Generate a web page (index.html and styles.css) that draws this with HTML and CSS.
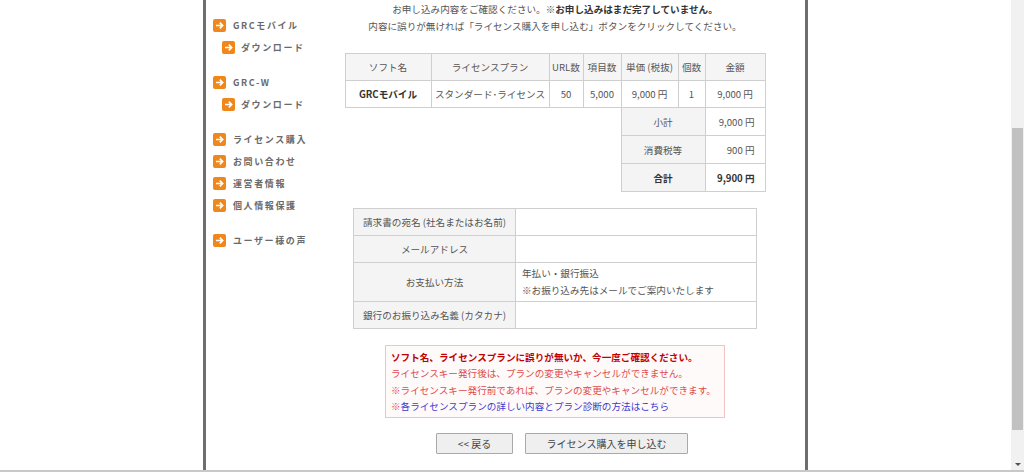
FILE: index.html
```html
<!DOCTYPE html>
<html lang="ja">
<head>
<meta charset="utf-8">
<title>ライセンス購入 確認</title>
<link rel="stylesheet" href="styles.css">
</head>
<body>
<div class="screen">
  <div class="viewport">
    <div class="gutter"></div>
    <div class="frame">
      <nav class="sidebar">
        <ul class="group">
          <li class="item"><span class="ico"><svg viewBox="0 0 13 13"><rect width="13" height="13" rx="2" fill="#f0871a"/><path d="M3 6.5h6.5M6.8 3.6l2.9 2.9-2.9 2.9" fill="none" stroke="#fff" stroke-width="1.6"/></svg></span>GRCモバイル</li>
          <li class="item sub"><span class="ico"><svg viewBox="0 0 13 13"><rect width="13" height="13" rx="2" fill="#f0871a"/><path d="M3 6.5h6.5M6.8 3.6l2.9 2.9-2.9 2.9" fill="none" stroke="#fff" stroke-width="1.6"/></svg></span>ダウンロード</li>
        </ul>
        <ul class="group">
          <li class="item"><span class="ico"><svg viewBox="0 0 13 13"><rect width="13" height="13" rx="2" fill="#f0871a"/><path d="M3 6.5h6.5M6.8 3.6l2.9 2.9-2.9 2.9" fill="none" stroke="#fff" stroke-width="1.6"/></svg></span>GRC-W</li>
          <li class="item sub"><span class="ico"><svg viewBox="0 0 13 13"><rect width="13" height="13" rx="2" fill="#f0871a"/><path d="M3 6.5h6.5M6.8 3.6l2.9 2.9-2.9 2.9" fill="none" stroke="#fff" stroke-width="1.6"/></svg></span>ダウンロード</li>
        </ul>
        <ul class="group">
          <li class="item"><span class="ico"><svg viewBox="0 0 13 13"><rect width="13" height="13" rx="2" fill="#f0871a"/><path d="M3 6.5h6.5M6.8 3.6l2.9 2.9-2.9 2.9" fill="none" stroke="#fff" stroke-width="1.6"/></svg></span>ライセンス購入</li>
          <li class="item"><span class="ico"><svg viewBox="0 0 13 13"><rect width="13" height="13" rx="2" fill="#f0871a"/><path d="M3 6.5h6.5M6.8 3.6l2.9 2.9-2.9 2.9" fill="none" stroke="#fff" stroke-width="1.6"/></svg></span>お問い合わせ</li>
          <li class="item"><span class="ico"><svg viewBox="0 0 13 13"><rect width="13" height="13" rx="2" fill="#f0871a"/><path d="M3 6.5h6.5M6.8 3.6l2.9 2.9-2.9 2.9" fill="none" stroke="#fff" stroke-width="1.6"/></svg></span>運営者情報</li>
          <li class="item"><span class="ico"><svg viewBox="0 0 13 13"><rect width="13" height="13" rx="2" fill="#f0871a"/><path d="M3 6.5h6.5M6.8 3.6l2.9 2.9-2.9 2.9" fill="none" stroke="#fff" stroke-width="1.6"/></svg></span>個人情報保護</li>
        </ul>
        <ul class="group">
          <li class="item"><span class="ico"><svg viewBox="0 0 13 13"><rect width="13" height="13" rx="2" fill="#f0871a"/><path d="M3 6.5h6.5M6.8 3.6l2.9 2.9-2.9 2.9" fill="none" stroke="#fff" stroke-width="1.6"/></svg></span>ユーザー様の声</li>
        </ul>
      </nav>
      <main class="main">
        <p class="intro">お申し込み内容をご確認ください。※<b>お申し込みはまだ完了していません。</b><br>内容に誤りが無ければ「ライセンス購入を申し込む」ボタンをクリックしてください。</p>

        <table class="order">
          <colgroup>
            <col class="c1"><col class="c2"><col class="c3"><col class="c4"><col class="c5"><col class="c6"><col class="c7">
          </colgroup>
          <tr class="head">
            <th>ソフト名</th><th>ライセンスプラン</th><th>URL数</th><th>項目数</th><th>単価 (税抜)</th><th>個数</th><th>金額</th>
          </tr>
          <tr class="data">
            <td class="soft">GRCモバイル</td><td>スタンダード･ライセンス</td><td>50</td><td>5,000</td><td>9,000 円</td><td>1</td><td>9,000 円</td>
          </tr>
          <tr class="sum">
            <td class="blank" colspan="4"></td><td class="lbl" colspan="2">小計</td><td class="val">9,000 円</td>
          </tr>
          <tr class="sum">
            <td class="blank" colspan="4"></td><td class="lbl" colspan="2">消費税等</td><td class="val">900 円</td>
          </tr>
          <tr class="sum total">
            <td class="blank" colspan="4"></td><td class="lbl" colspan="2">合計</td><td class="val">9,900 円</td>
          </tr>
        </table>

        <table class="form">
          <tr><th>請求書の宛名 (社名またはお名前)</th><td></td></tr>
          <tr><th>メールアドレス</th><td></td></tr>
          <tr class="tall"><th>お支払い方法</th><td>年払い・銀行振込<br>※お振り込み先はメールでご案内いたします</td></tr>
          <tr><th>銀行のお振り込み名義 (カタカナ)</th><td></td></tr>
        </table>

        <div class="notice">
          <p class="warn">ソフト名、ライセンスプランに誤りが無いか、今一度ご確認ください。</p>
          <p class="red">ライセンスキー発行後は、プランの変更やキャンセルができません。</p>
          <p class="red">※ライセンスキー発行前であれば、プランの変更やキャンセルができます。</p>
          <p class="red">※<a class="link" href="#">各ライセンスプランの詳しい内容とプラン診断の方法はこちら</a></p>
        </div>

        <div class="buttons">
          <button class="btn back" type="button">&lt;&lt; 戻る</button>
          <button class="btn submit" type="button">ライセンス購入を申し込む</button>
        </div>
      </main>
    </div>
    <div class="rest"></div>
    <div class="scrollbar">
      <div class="track-top"></div>
      <div class="thumb"></div>
      <div class="track-bottom"><span class="arrow"></span></div>
    </div>
  </div>
  <div class="hline"></div>
</div>
</body>
</html>
```
FILE: styles.css
```css
* { box-sizing: border-box; }
html, body { margin: 0; padding: 0; background: #fff; }
body {
  font-family: "Noto Sans CJK JP", "Noto Sans", sans-serif;
  font-size: 9.6px;
  color: #555;
  overflow: hidden;
}
.screen { width: 1024px; height: 472px; display: flex; flex-direction: column; }
.viewport { display: flex; height: 470px; }
.gutter { width: 203px; flex: none; }
.frame {
  width: 605px;
  flex: none;
  display: flex;
  border-left: 3px solid #6e6e6e;
  border-right: 3px solid #6e6e6e;
}
.rest { flex: 1; }
.hline { height: 2px; background: #c8c8c8; }

/* sidebar */
.sidebar { width: 134px; flex: none; padding: 14px 0 0 7px; }
.group { list-style: none; margin: 0 0 13px; padding: 0; }
.item {
  height: 22px;
  display: flex;
  align-items: center;
  font-size: 9px;
  font-weight: bold;
  letter-spacing: 1.6px;
  color: #6a6a6a;
}
.item.sub { padding-left: 9px; }
.ico { width: 13px; height: 13px; margin-right: 7px; display: block; flex: none; }
.item.sub .ico { margin-right: 6px; }
.ico svg { width: 13px; height: 13px; display: block; }

/* main */
.main { width: 430px; flex: none; display: flex; flex-direction: column; align-items: center; }
.intro { margin: 0; line-height: 17px; text-align: center; padding-top: 1px; }
.intro b { color: #333; }

table { border-collapse: collapse; }
.order { width: 420px; margin-top: 18px; table-layout: fixed; }
.c1 { width: 86px; } .c2 { width: 118px; } .c3 { width: 34px; } .c4 { width: 38px; }
.c5 { width: 57px; } .c6 { width: 27px; } .c7 { width: 60px; }
.order th, .order td {
  border: 1px solid #cfcfcf;
  text-align: center;
  font-weight: normal;
  padding: 0;
  white-space: nowrap;
}
.order .head th { height: 27px; background: #f5f5f5; }
.order .data td { height: 27px; }
.order .soft { font-weight: bold; color: #333; }
.order .sum td { height: 28px; }
.order .blank { border: none; }
.order .lbl { background: #f4f4f4; }
.order .val { text-align: right; padding-right: 10px; }
.order .total td { font-weight: bold; color: #333; }

.form { width: 404px; margin-top: 16px; table-layout: fixed; }
.form th, .form td { border: 1px solid #cfcfcf; height: 27px; padding: 0; }
.form th { width: 162px; background: #f4f4f4; font-weight: normal; text-align: center; }
.form td { padding-left: 6px; line-height: 17px; }
.form .tall th, .form .tall td { height: 39px; }

.notice {
  width: 340px;
  margin-top: 16px;
  border: 1px solid #f0c4c4;
  background: #fffafa;
  padding: 3px 5px 3px;
  line-height: 16.3px;
}
.notice p { margin: 0; white-space: nowrap; }
.notice .warn { color: #c00000; font-weight: bold; }
.notice .red { color: #dd4a4a; }
.notice .link { color: #3b3bd0; text-decoration: none; }

.buttons { display: flex; gap: 12px; margin-top: 15px; padding-left: 14px; }
.btn {
  height: 21px;
  font-family: inherit;
  font-size: 10px;
  color: #444;
  background: #efefef;
  border: 1px solid #a9a9a9;
  border-radius: 1px;
  padding: 0;
}
.btn.back { width: 77px; }
.btn.submit { width: 163px; }

/* scrollbar */
.scrollbar { width: 13px; flex: none; background: #f1f1f1; display: flex; flex-direction: column; }
.track-top { height: 128px; }
.thumb { height: 302px; background: #c1c1c1; margin: 0 1px; }
.track-bottom { flex: 1; display: flex; align-items: flex-end; justify-content: center; padding-bottom: 4px; }
.arrow {
  width: 0; height: 0;
  border-left: 3px solid transparent;
  border-right: 3px solid transparent;
  border-top: 3px solid #505050;
}
```
